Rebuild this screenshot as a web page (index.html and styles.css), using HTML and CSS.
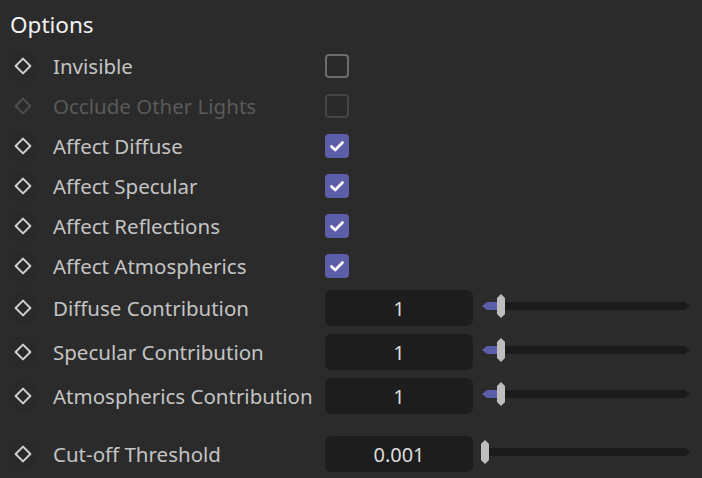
FILE: index.html
```html
<!DOCTYPE html>
<html>
<head>
<meta charset="utf-8">
<link rel="stylesheet" href="styles.css">
</head>
<body>
<div class="panel">
  <div class="title">Options</div>

  <div class="row">
    <span class="key"><svg viewBox="0 0 20 20" width="20" height="20"><path d="M10 2.6 L17.4 10 L10 17.4 L2.6 10 Z" fill="none" stroke="currentColor" stroke-width="2" stroke-linejoin="round"/></svg></span>
    <span class="label">Invisible</span>
    <span class="check"></span>
  </div>
  <div class="row disabled">
    <span class="key"><svg viewBox="0 0 20 20" width="20" height="20"><path d="M10 2.6 L17.4 10 L10 17.4 L2.6 10 Z" fill="none" stroke="currentColor" stroke-width="2" stroke-linejoin="round"/></svg></span>
    <span class="label">Occlude Other Lights</span>
    <span class="check"></span>
  </div>
  <div class="row">
    <span class="key"><svg viewBox="0 0 20 20" width="20" height="20"><path d="M10 2.6 L17.4 10 L10 17.4 L2.6 10 Z" fill="none" stroke="currentColor" stroke-width="2" stroke-linejoin="round"/></svg></span>
    <span class="label">Affect Diffuse</span>
    <span class="check on"><svg viewBox="0 0 24 24" width="24" height="24"><path d="M6.5 12.5 L10.2 16 L17.5 8.5" fill="none" stroke="#fff" stroke-width="2.6" stroke-linecap="round" stroke-linejoin="round"/></svg></span>
  </div>
  <div class="row">
    <span class="key"><svg viewBox="0 0 20 20" width="20" height="20"><path d="M10 2.6 L17.4 10 L10 17.4 L2.6 10 Z" fill="none" stroke="currentColor" stroke-width="2" stroke-linejoin="round"/></svg></span>
    <span class="label">Affect Specular</span>
    <span class="check on"><svg viewBox="0 0 24 24" width="24" height="24"><path d="M6.5 12.5 L10.2 16 L17.5 8.5" fill="none" stroke="#fff" stroke-width="2.6" stroke-linecap="round" stroke-linejoin="round"/></svg></span>
  </div>
  <div class="row">
    <span class="key"><svg viewBox="0 0 20 20" width="20" height="20"><path d="M10 2.6 L17.4 10 L10 17.4 L2.6 10 Z" fill="none" stroke="currentColor" stroke-width="2" stroke-linejoin="round"/></svg></span>
    <span class="label">Affect Reflections</span>
    <span class="check on"><svg viewBox="0 0 24 24" width="24" height="24"><path d="M6.5 12.5 L10.2 16 L17.5 8.5" fill="none" stroke="#fff" stroke-width="2.6" stroke-linecap="round" stroke-linejoin="round"/></svg></span>
  </div>
  <div class="row">
    <span class="key"><svg viewBox="0 0 20 20" width="20" height="20"><path d="M10 2.6 L17.4 10 L10 17.4 L2.6 10 Z" fill="none" stroke="currentColor" stroke-width="2" stroke-linejoin="round"/></svg></span>
    <span class="label">Affect Atmospherics</span>
    <span class="check on"><svg viewBox="0 0 24 24" width="24" height="24"><path d="M6.5 12.5 L10.2 16 L17.5 8.5" fill="none" stroke="#fff" stroke-width="2.6" stroke-linecap="round" stroke-linejoin="round"/></svg></span>
  </div>

  <div class="row tall">
    <span class="key"><svg viewBox="0 0 20 20" width="20" height="20"><path d="M10 2.6 L17.4 10 L10 17.4 L2.6 10 Z" fill="none" stroke="currentColor" stroke-width="2" stroke-linejoin="round"/></svg></span>
    <span class="label">Diffuse Contribution</span>
    <span class="field">1</span>
    <span class="slider"><span class="track"><span class="fill" style="width:18px"></span></span><span class="handle" style="left:15px"></span></span>
  </div>
  <div class="row tall">
    <span class="key"><svg viewBox="0 0 20 20" width="20" height="20"><path d="M10 2.6 L17.4 10 L10 17.4 L2.6 10 Z" fill="none" stroke="currentColor" stroke-width="2" stroke-linejoin="round"/></svg></span>
    <span class="label">Specular Contribution</span>
    <span class="field">1</span>
    <span class="slider"><span class="track"><span class="fill" style="width:18px"></span></span><span class="handle" style="left:15px"></span></span>
  </div>
  <div class="row tall">
    <span class="key"><svg viewBox="0 0 20 20" width="20" height="20"><path d="M10 2.6 L17.4 10 L10 17.4 L2.6 10 Z" fill="none" stroke="currentColor" stroke-width="2" stroke-linejoin="round"/></svg></span>
    <span class="label">Atmospherics Contribution</span>
    <span class="field">1</span>
    <span class="slider"><span class="track"><span class="fill" style="width:18px"></span></span><span class="handle" style="left:15px"></span></span>
  </div>
  <div class="row tall spaced">
    <span class="key"><svg viewBox="0 0 20 20" width="20" height="20"><path d="M10 2.6 L17.4 10 L10 17.4 L2.6 10 Z" fill="none" stroke="currentColor" stroke-width="2" stroke-linejoin="round"/></svg></span>
    <span class="label">Cut-off Threshold</span>
    <span class="field">0.001</span>
    <span class="slider"><span class="track"></span><span class="handle" style="left:-1px"></span></span>
  </div>
</div>
</body>
</html>
```

FILE: styles.css
```css
html, body {
  margin: 0;
  padding: 0;
  background: #2b2b2b;
  width: 702px;
  height: 478px;
  overflow: hidden;
}

.panel {
  font-family: "Noto Sans", "Open Sans", sans-serif;
  color: #c4c4c4;
  padding: 0 12px 0 7px;
}

.title {
  height: 46px;
  box-sizing: border-box;
  padding: 10px 0 0 3px;
  line-height: 30px;
  font-size: 22.5px;
  color: #f2f2f2;
}

.row {
  display: flex;
  align-items: center;
  height: 40px;
}

.row.tall {
  height: 44px;
}

.row.spaced {
  margin-top: 14px;
}

.key {
  width: 31px;
  height: 31px;
  border-radius: 50%;
  background: #292929;
  display: flex;
  align-items: center;
  justify-content: center;
  color: #d0d0d0;
  flex: none;
  margin-right: 15px;
}

.key svg {
  display: block;
}

.label {
  width: 272px;
  flex: none;
  font-size: 20.5px;
  white-space: nowrap;
  line-height: 26px;
}

.check {
  width: 24px;
  height: 24px;
  box-sizing: border-box;
  border: 2.5px solid #6c6c6c;
  border-radius: 4px;
  background: #2a2a2a;
  flex: none;
}

.check.on {
  background: #5c5fa7;
  border: none;
}

.check svg {
  display: block;
}

.disabled .key {
  background: transparent;
  color: #4e4e4e;
}

.disabled .label {
  color: #5a5a5a;
}

.disabled .check {
  border-color: #444444;
}

.field {
  width: 148px;
  height: 36px;
  flex: none;
  border-radius: 6px;
  background: #1d1d1d;
  color: #dcdcdc;
  font-size: 20px;
  display: flex;
  align-items: center;
  justify-content: center;
}

.slider {
  position: relative;
  flex: none;
  width: 208px;
  height: 24px;
  margin: 0 0 4px 9px;
  display: flex;
  align-items: center;
}

.track {
  position: relative;
  display: block;
  width: 100%;
  height: 8px;
  background: #1b1b1b;
  clip-path: polygon(5px 0, calc(100% - 5px) 0, 100% 50%, calc(100% - 5px) 100%, 5px 100%, 0 50%);
}

.fill {
  position: absolute;
  left: 0;
  top: 0;
  height: 8px;
  background: #5c5fa7;
}

.handle {
  position: absolute;
  top: 0;
  width: 8px;
  height: 24px;
  background: #bdbdbd;
  clip-path: polygon(50% 0, 100% 4px, 100% calc(100% - 4px), 50% 100%, 0 calc(100% - 4px), 0 4px);
}
```
